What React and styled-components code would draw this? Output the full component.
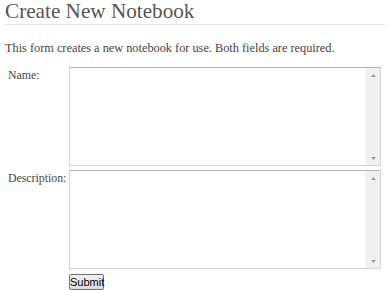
import React from "react";
import styled, { createGlobalStyle } from "styled-components";

const Global = createGlobalStyle`
  html, body { margin: 0; padding: 0; background: #fff; }
  body { font-family: "Liberation Serif", "DejaVu Serif", serif; color: #444; }
`;

const Page = styled.div`
  padding: 0 4px 0 5px;
  width: 389px;
  box-sizing: border-box;
`;

const Title = styled.h1`
  margin: 0;
  padding: 0 0 2px 0;
  font-family: "Liberation Serif", serif;
  font-weight: normal;
  font-size: 21.2px;
  line-height: 22px;
  color: #555;
  border-bottom: 1px solid #e8e8e8;
`;

const Intro = styled.p`
  margin: 15px 0 11px 0;
  font-size: 12.3px;
  line-height: 16px;
  color: #444;
`;

const Form = styled.form`
  display: grid;
  grid-template-columns: 64px 312px;
  row-gap: 4px;
`;

const Label = styled.label`
  padding: 0 0 0 3px;
  font-size: 11.8px;
  line-height: 16px;
  color: #444;
`;

const Field = styled.div`
  box-sizing: border-box;
  width: 312px;
  height: 99px;
  display: flex;
  border: 1px solid #d4d4d4;
  border-top-color: #b4b4b4;
  background: #fff;
`;

const Area = styled.textarea`
  flex: 1;
  margin: 0;
  padding: 1px;
  border: none;
  outline: none;
  resize: none;
  overflow: hidden;
  font-family: "Liberation Sans", sans-serif;
  font-size: 12px;
`;

const Rail = styled.div`
  width: 14px;
  display: flex;
  flex-direction: column;
  justify-content: space-between;
  align-items: center;
  background: #f0f0f0;
  border-left: 1px solid #f7f7f7;
  padding: 6px 0 5px;
`;

const Arrow = ({ down }) => (
  <svg width="5" height="3" viewBox="0 0 5 3">
    <path
      d={down ? "M0 0 H5 L2.5 3 Z" : "M0 3 H5 L2.5 0 Z"}
      fill="#999"
    />
  </svg>
);

const Submit = styled.button`
  grid-column: 2;
  justify-self: start;
  margin-top: 1px;
  font-family: "Liberation Sans", Arial, sans-serif;
  font-size: 11px;
  padding: 0;
  width: 35px;
  height: 16px;
  line-height: 14px;
  border: 1px solid #707070;
  border-radius: 2px;
  background: linear-gradient(#f2f2f2, #dcdcdc);
  color: #000;
`;

function TextField({ id }) {
  return (
    <Field>
      <Area id={id} />
      <Rail>
        <Arrow />
        <Arrow down />
      </Rail>
    </Field>
  );
}

export default function App() {
  return (
    <>
      <Global />
      <Page>
        <Title>Create New Notebook</Title>
        <Intro>This form creates a new notebook for use. Both fields are required.</Intro>
        <Form onSubmit={(e) => e.preventDefault()}>
          <Label htmlFor="name">Name:</Label>
          <TextField id="name" />
          <Label htmlFor="desc">Description:</Label>
          <TextField id="desc" />
          <Submit type="submit">Submit</Submit>
        </Form>
      </Page>
    </>
  );
}
